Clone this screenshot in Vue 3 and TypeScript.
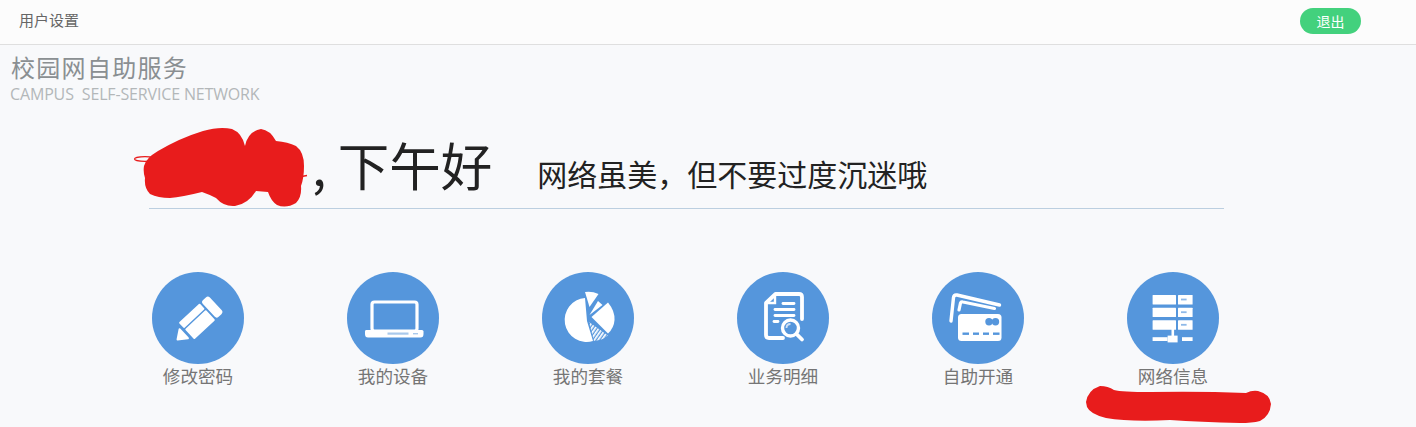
<script setup lang="ts">
const motto: string = '网络虽美，但不要过度沉迷哦'
</script>

<template>
  <div class="page">
    <header class="topbar">
      <span class="settings">用户设置</span>
      <button class="logout">退出</button>
    </header>

    <div class="brand">
      <div class="brand-cn">校园网自助服务</div>
      <div class="brand-en">CAMPUS&nbsp;&nbsp;SELF-SERVICE NETWORK</div>
    </div>

    <div class="greeting">
      <span class="name-space"></span>
      <span class="hello">, 下午好</span>
      <span class="motto">{{ motto }}</span>
    </div>

    <nav class="tiles">
      <a class="tile">
        <svg class="disc" viewBox="0 0 92 92">
          <circle cx="46" cy="46" r="46" fill="#5596dc" />
          <g transform="translate(25.5 67.5) rotate(-43) scale(0.95)" fill="#fff">
            <path d="M0 0 L9 -6.5 V6.5 Z" stroke="#fff" stroke-width="2" stroke-linejoin="round" />
            <rect x="13" y="-12" width="30" height="8" rx="1" />
            <rect x="13" y="-2.5" width="30" height="14.5" rx="1" />
            <rect x="45" y="-12" width="10" height="24" rx="3" />
          </g>
        </svg>
        <span class="tile-label">修改密码</span>
      </a>

      <a class="tile">
        <svg class="disc" viewBox="0 0 92 92">
          <circle cx="46" cy="46" r="46" fill="#5596dc" />
          <rect x="25" y="30" width="45" height="29" rx="2.5" fill="none" stroke="#fff" stroke-width="3.2" />
          <path d="M19 58 H75 Q76.5 58 76.5 59.5 V62 Q76.5 65.5 73.5 65.5 H21 Q18 65.5 18 62 V59.5 Q18 58 19 58 Z" fill="#fff" />
          <rect x="40.5" y="60.5" width="21" height="2.2" fill="#a9c9ec" />
          <rect x="66" y="61" width="5" height="1.4" fill="#a9c9ec" />
        </svg>
        <span class="tile-label">我的设备</span>
      </a>

      <a class="tile">
        <svg class="disc" viewBox="0 0 92 92">
          <defs>
            <pattern id="hatch" width="3" height="3" patternUnits="userSpaceOnUse" patternTransform="rotate(-55)">
              <rect width="3" height="1.7" fill="#fff" />
            </pattern>
          </defs>
          <circle cx="46" cy="46" r="46" fill="#5596dc" />
          <path d="M45 49 L43 26 A22 22 0 1 0 51 69 Z" fill="#fff" />
          <path d="M43 20 Q50 19 56.5 22 L47.5 35 Z" fill="#fff" />
          <path d="M47.5 43 L56 29 L60.5 33 Z" fill="#fff" />
          <path d="M49.5 45 L66 30.5 Q73 39 72.5 48 Q72 56 66 61.5 Z" fill="#fff" />
          <path d="M47 50 L66 63.5 Q61 68 52 69 Z" fill="url(#hatch)" />
        </svg>
        <span class="tile-label">我的套餐</span>
      </a>

      <a class="tile">
        <svg class="disc" viewBox="0 0 92 92">
          <circle cx="46" cy="46" r="46" fill="#5596dc" />
          <path d="M46 66 H32 Q29 66 29 63 V31 L38.5 22 H62 Q65 22 65 25 V47" fill="none" stroke="#fff" stroke-width="3.8" stroke-linejoin="round" stroke-linecap="round" />
          <path d="M38 23 V31 H30" fill="none" stroke="#fff" stroke-width="2.4" />
          <g stroke="#fff" stroke-width="2.8" stroke-linecap="round">
            <path d="M46 31.5 H57" />
            <path d="M38 37.5 H57" />
            <path d="M38 43.5 H57" />
            <path d="M37 49.5 H41" />
          </g>
          <circle cx="53.5" cy="56" r="8" fill="#5596dc" stroke="#fff" stroke-width="3.4" />
          <path d="M49.5 56 Q49.5 52 53.5 52" fill="none" stroke="#cfe0f4" stroke-width="1.8" />
          <path d="M59.5 62 L65 67.5" stroke="#fff" stroke-width="3.8" stroke-linecap="round" />
        </svg>
        <span class="tile-label">业务明细</span>
      </a>

      <a class="tile">
        <svg class="disc" viewBox="0 0 92 92">
          <circle cx="46" cy="46" r="46" fill="#5596dc" />
          <path d="M19 49 L21.5 25.5 Q22 22.5 25 23 L67.5 33" fill="none" stroke="#fff" stroke-width="3.4" stroke-linecap="round" />
          <path d="M27 38 L28.5 31 Q29 29.5 31 30 L62.5 36.5" fill="none" stroke="#fff" stroke-width="3.2" stroke-linecap="round" />
          <rect x="26" y="42" width="43.5" height="27" rx="3.5" fill="#fff" />
          <circle cx="57" cy="49.8" r="3.7" fill="#5596dc" />
          <circle cx="63.5" cy="49.8" r="3.7" fill="#5596dc" />
          <g fill="#5596dc">
            <rect x="30.5" y="60.5" width="6.5" height="2.4" />
            <rect x="41" y="60.5" width="6" height="2.4" />
            <rect x="51" y="60.5" width="6" height="2.4" />
            <rect x="61" y="60.5" width="6.5" height="2.4" />
          </g>
        </svg>
        <span class="tile-label">自助开通</span>
      </a>

      <a class="tile">
        <svg class="disc" viewBox="0 0 92 92">
          <circle cx="46" cy="46" r="46" fill="#5596dc" />
          <g fill="#fff">
            <rect x="25.6" y="23" width="23.4" height="9.4" rx="0.5" />
            <rect x="51" y="23" width="14.6" height="9.4" rx="0.5" />
            <rect x="25.6" y="35.7" width="23.4" height="9.4" rx="0.5" />
            <rect x="51" y="35.7" width="14.6" height="9.4" rx="0.5" />
            <rect x="25.6" y="48.3" width="23.4" height="9.4" rx="0.5" />
            <rect x="51" y="48.3" width="14.6" height="9.4" rx="0.5" />
            <rect x="44.5" y="57" width="2.6" height="8" />
            <rect x="25.6" y="65.2" width="15" height="3.8" />
            <rect x="40.6" y="63.6" width="10" height="6.8" />
            <rect x="55" y="65.2" width="10.6" height="3.8" />
          </g>
          <g fill="#8fb9e8">
            <rect x="54" y="26.6" width="5.6" height="1.8" />
            <rect x="54" y="39.3" width="5.6" height="1.8" />
            <rect x="54" y="51.9" width="5.6" height="1.8" />
          </g>
        </svg>
        <span class="tile-label">网络信息</span>
      </a>
    </nav>

    <svg class="scribbles" width="1416" height="427" viewBox="0 0 1416 427">
      <ellipse cx="145" cy="159" rx="10.5" ry="2.3" fill="none" stroke="#e81c1c" stroke-width="1.2" />
      <path d="M296 177.5 L307 175.5" stroke="#e81c1c" stroke-width="1.3" fill="none" />
      <path d="M144 166 Q146 158 158 151 Q180 138 203 131 Q220 126 232 129 Q242 133 245 146 Q248 131 261 129 Q270 130 276 141 Q288 142 296 146 Q304 152 304 166 Q304 178 301 186 Q302 197 296 203 Q286 209 277 205 Q271 201 268 192 L256 191 Q248 204 235 206 Q224 207 216 198 Q208 194 202 192 Q182 197 170 198 Q158 198 150 194 Q144 188 145 178 Q143 172 144 166 Z" fill="#e81c1c" />
      <path d="M1086 402 Q1088 390 1100 386 Q1108 386 1114 390 Q1122 392 1150 392 Q1200 391 1246 393 Q1252 390 1258 391 Q1270 394 1271 404 Q1270 416 1260 421 Q1252 423 1240 423 Q1200 422 1170 420 Q1130 422 1106 418 Q1090 414 1087 407 Z" fill="#e81c1c" />
    </svg>
  </div>
</template>

<style>
html, body {
  margin: 0;
  background: #f8f9fb;
}
</style>

<style scoped>
.page {
  position: relative;
  width: 1416px;
  height: 427px;
  overflow: hidden;
  background: #f8f9fb;
  font-family: "Noto Sans CJK SC", "Liberation Sans", sans-serif;
}
.topbar {
  display: flex;
  align-items: center;
  justify-content: space-between;
  box-sizing: border-box;
  height: 45px;
  padding: 0 55px 3px 19px;
  background: #fcfcfc;
  border-bottom: 1px solid #dfdfdf;
}
.settings {
  margin-bottom: 2px;
  font-size: 15px;
  font-weight: 400;
  color: #666;
}
.logout {
  width: 61px;
  height: 26px;
  padding: 0;
  border: 0;
  border-radius: 13px;
  background: #43d17d;
  color: #fff;
  font-family: inherit;
  font-size: 14px;
  line-height: 26px;
}
.brand {
  padding: 6px 0 0 11px;
}
.brand-cn {
  font-size: 24px;
  line-height: 32px;
  letter-spacing: 1.3px;
  font-weight: 400;
  color: #8a8f92;
}
.brand-en {
  margin-top: 1px;
  margin-left: -1px;
  font-family: "Open Sans", "Liberation Sans", sans-serif;
  font-size: 16px;
  line-height: 20px;
  letter-spacing: -0.15px;
  color: #b3b7b9;
}
.greeting {
  display: flex;
  align-items: baseline;
  box-sizing: border-box;
  width: 1075px;
  height: 105px;
  margin: 0 0 0 149px;
  border-bottom: 1px solid #bccfe0;
  color: #222;
}
.name-space {
  width: 163px;
}
.hello {
  font-size: 51.5px;
  line-height: 120px;
  font-weight: 400;
}
.motto {
  margin-left: 45px;
  font-size: 30px;
  font-weight: 400;
}
.tiles {
  display: grid;
  grid-template-columns: repeat(6, 195px);
  margin: 63px 0 0 100.5px;
}
.tile {
  display: flex;
  flex-direction: column;
  align-items: center;
}
.disc {
  display: block;
  width: 92px;
  height: 92px;
}
.tile-label {
  font-size: 17.6px;
  line-height: 24px;
  font-weight: 400;
  color: #757575;
}
.scribbles {
  position: absolute;
  left: 0;
  top: 0;
  pointer-events: none;
}
</style>
